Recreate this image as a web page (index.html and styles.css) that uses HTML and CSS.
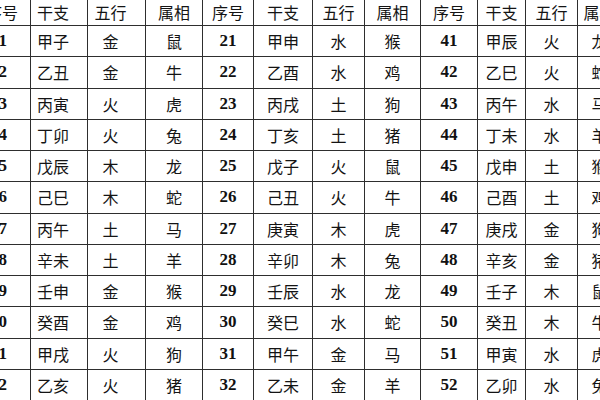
FILE: index.html
```html
<!DOCTYPE html>
<html lang="zh">
<head>
<meta charset="utf-8">
<link rel="stylesheet" href="styles.css">
</head>
<body>
<table class="cycle">
  <colgroup>
    <col class="c57"><col class="c57"><col class="c58"><col class="c57">
    <col class="c51"><col class="c59"><col class="c52"><col class="c56">
    <col class="c57"><col class="c48"><col class="c52"><col class="c44">
  </colgroup>
  <thead>
    <tr><th>序号</th><th class="sh">干支</th><th class="sh">五行</th><th>属相</th><th>序号</th><th>干支</th><th>五行</th><th>属相</th><th>序号</th><th>干支</th><th>五行</th><th>属相</th></tr>
  </thead>
  <tbody>
    <tr><td class="n first">1</td><td class="sh">甲子</td><td class="sh">金</td><td>鼠</td><td class="n">21</td><td>甲申</td><td>水</td><td>猴</td><td class="n">41</td><td>甲辰</td><td>火</td><td>龙</td></tr>
    <tr><td class="n first">2</td><td class="sh">乙丑</td><td class="sh">金</td><td>牛</td><td class="n">22</td><td>乙酉</td><td>水</td><td>鸡</td><td class="n">42</td><td>乙巳</td><td>火</td><td>蛇</td></tr>
    <tr><td class="n first">3</td><td class="sh">丙寅</td><td class="sh">火</td><td>虎</td><td class="n">23</td><td>丙戌</td><td>土</td><td>狗</td><td class="n">43</td><td>丙午</td><td>水</td><td>马</td></tr>
    <tr><td class="n first">4</td><td class="sh">丁卯</td><td class="sh">火</td><td>兔</td><td class="n">24</td><td>丁亥</td><td>土</td><td>猪</td><td class="n">44</td><td>丁未</td><td>水</td><td>羊</td></tr>
    <tr><td class="n first">5</td><td class="sh">戊辰</td><td class="sh">木</td><td>龙</td><td class="n">25</td><td>戊子</td><td>火</td><td>鼠</td><td class="n">45</td><td>戊申</td><td>土</td><td>猴</td></tr>
    <tr><td class="n first">6</td><td class="sh">己巳</td><td class="sh">木</td><td>蛇</td><td class="n">26</td><td>己丑</td><td>火</td><td>牛</td><td class="n">46</td><td>己酉</td><td>土</td><td>鸡</td></tr>
    <tr><td class="n first">7</td><td class="sh">丙午</td><td class="sh">土</td><td>马</td><td class="n">27</td><td>庚寅</td><td>木</td><td>虎</td><td class="n">47</td><td>庚戌</td><td>金</td><td>狗</td></tr>
    <tr><td class="n first">8</td><td class="sh">辛未</td><td class="sh">土</td><td>羊</td><td class="n">28</td><td>辛卯</td><td>木</td><td>兔</td><td class="n">48</td><td>辛亥</td><td>金</td><td>猪</td></tr>
    <tr><td class="n first">9</td><td class="sh">壬申</td><td class="sh">金</td><td>猴</td><td class="n">29</td><td>壬辰</td><td>水</td><td>龙</td><td class="n">49</td><td>壬子</td><td>木</td><td>鼠</td></tr>
    <tr><td class="n first">10</td><td class="sh">癸酉</td><td class="sh">金</td><td>鸡</td><td class="n">30</td><td>癸巳</td><td>水</td><td>蛇</td><td class="n">50</td><td>癸丑</td><td>木</td><td>牛</td></tr>
    <tr><td class="n first">11</td><td class="sh">甲戌</td><td class="sh">火</td><td>狗</td><td class="n">31</td><td>甲午</td><td>金</td><td>马</td><td class="n">51</td><td>甲寅</td><td>水</td><td>虎</td></tr>
    <tr><td class="n first">12</td><td class="sh">乙亥</td><td class="sh">火</td><td>猪</td><td class="n">32</td><td>乙未</td><td>金</td><td>羊</td><td class="n">52</td><td>乙卯</td><td>水</td><td>兔</td></tr>
  </tbody>
</table>
</body>
</html>
```

FILE: styles.css
```css
html, body {
  margin: 0;
  padding: 0;
  background: #ffffff;
  overflow: hidden;
}
body {
  width: 600px;
  height: 400px;
}
.cycle {
  border-collapse: collapse;
  table-layout: fixed;
  width: 644px;
  margin-left: -27px;
  margin-top: -3px;
  font-family: "Noto Sans CJK SC", "Noto Sans", sans-serif;
  font-size: 16px;
  color: #141414;
}
.c44 { width: 44px; }
.c48 { width: 48px; }
.c51 { width: 51px; }
.c52 { width: 52px; }
.c56 { width: 56px; }
.c57 { width: 57px; }
.c58 { width: 58px; }
.c59 { width: 59px; }
.cycle th,
.cycle td {
  border: 1px solid #2e2e2e;
  padding: 0;
  text-align: center;
  vertical-align: middle;
  line-height: 18px;
  font-weight: 400;
}
.cycle .sh {
  padding-right: 12px;
}
.cycle thead tr {
  height: 28px;
}
.cycle tbody tr {
  height: 31.25px;
}
.cycle td.n {
  font-family: "Liberation Serif", "Times New Roman", serif;
  font-weight: 700;
  font-size: 17px;
  color: #111111;
}
.cycle td.first {
  text-align: right;
  padding-right: 23px;
}
```
